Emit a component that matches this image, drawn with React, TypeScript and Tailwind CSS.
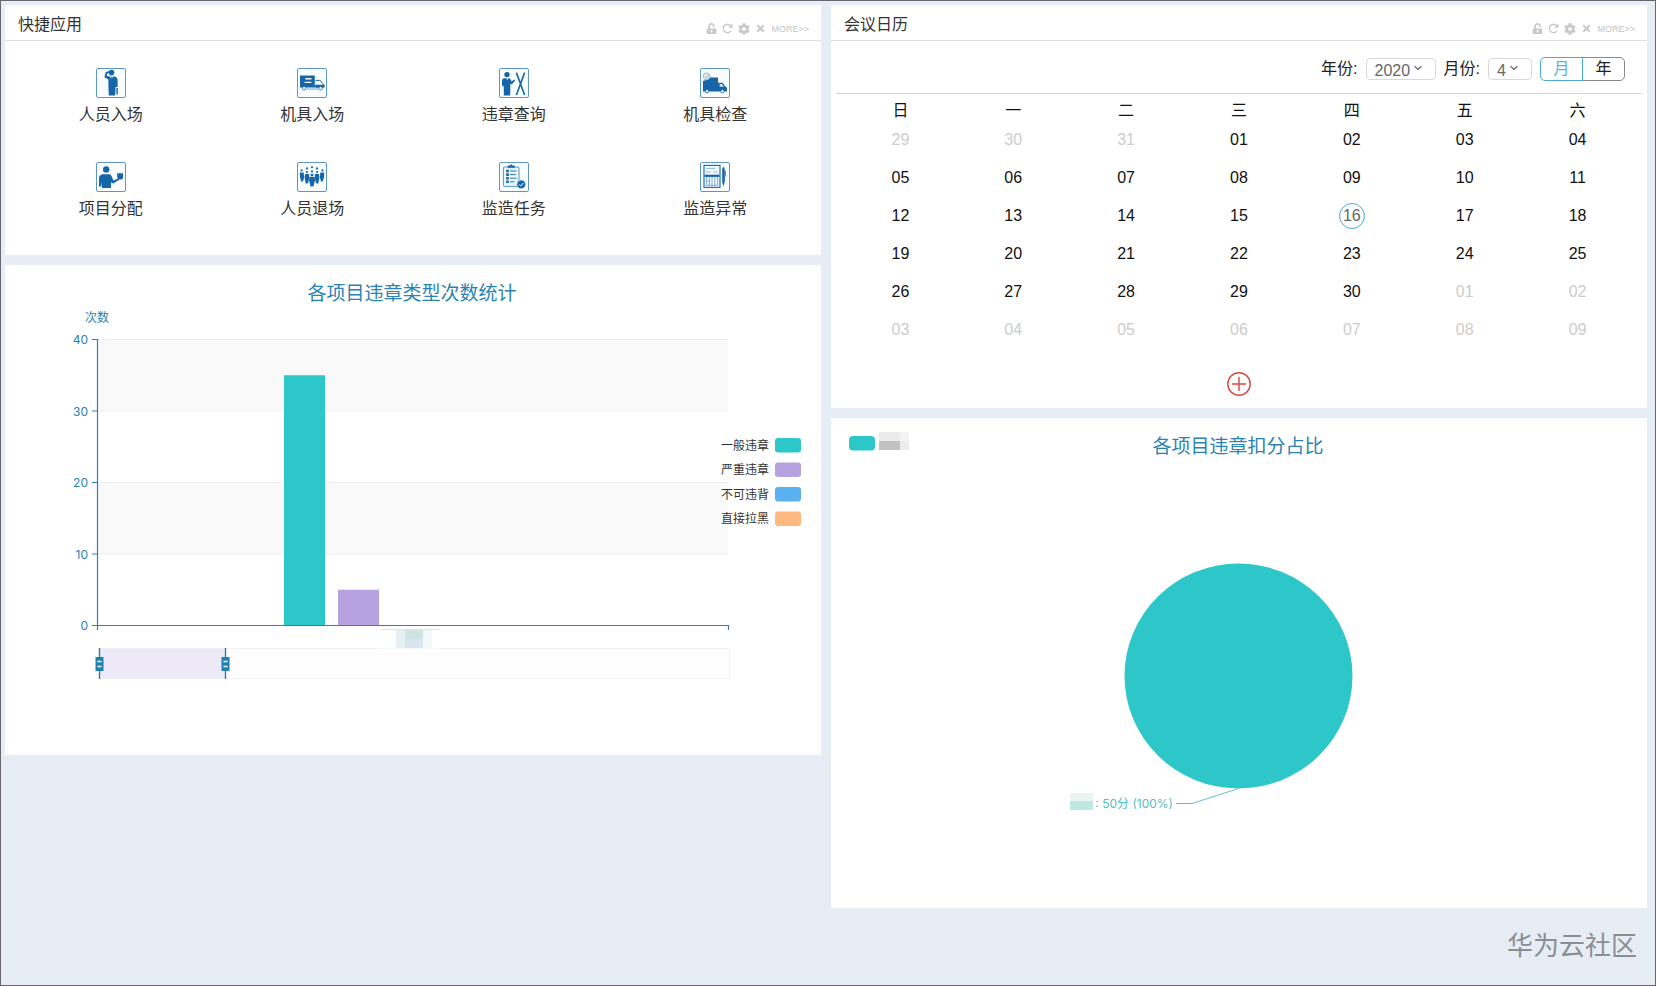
import { useState } from 'react'
import type { ReactNode } from 'react'
import { ChevronDown } from 'lucide-react'
import { FaCog, FaLock, FaTimes, FaUnlockAlt } from 'react-icons/fa'
import { FaArrowRotateRight } from 'react-icons/fa6'

type View = 'month' | 'year'

const BLUE = '#1565a8'
const AXIS = '#2a83b0'

const WEEKDAYS = ['日', '一', '二', '三', '四', '五', '六']

const WEEKS = [
  ['29', '30', '31', '01', '02', '03', '04'],
  ['05', '06', '07', '08', '09', '10', '11'],
  ['12', '13', '14', '15', '16', '17', '18'],
  ['19', '20', '21', '22', '23', '24', '25'],
  ['26', '27', '28', '29', '30', '01', '02'],
  ['03', '04', '05', '06', '07', '08', '09'],
]

const LEGEND = [
  { name: '一般违章', color: '#2ec7c9' },
  { name: '严重违章', color: '#b6a2de' },
  { name: '不可违背', color: '#5ab1ef' },
  { name: '直接拉黑', color: '#ffb980' },
]

const Salute = () => (
  <g fill={BLUE}>
    <circle cx="15.5" cy="4.6" r="2.8" />
    <path d="M8.4 9.2 L9.8 4 L13.6 3 L13.8 4.4 L11.2 5.4 L10.8 8 L13.6 8.6 L18.4 8.6 Q21.6 9 21.6 12.4 V19 H19.6 L19.2 27.5 H12.8 L12.4 18 V11.4 Z" />
    <path d="M14.2 8.6 L15.4 12.6 L16.8 8.6 Z" fill="#fff" />
    <path d="M15.2 9 L15.9 9 L16 12 L15.5 13 L15 12 Z" />
    <rect x="20.4" y="20" width="1.4" height="6.4" />
  </g>
)

const Truck = () => (
  <g fill={BLUE}>
    <path d="M3 7.5 H17.8 V18.5 H3 Z" />
    <path d="M8.4 10.8 H14.4 M7.6 14.4 H14.4" stroke="#fff" strokeWidth="1.4" />
    <path d="M18.6 12.4 H22.4 Q24.4 12.6 25.2 15.2 L27 16.8 V19 H18.6" fill="none" stroke={BLUE} strokeWidth="1" />
    <path d="M18.2 16.8 H27.2 V19.6 H3 V18 H18.2 Z" />
    <circle cx="7.2" cy="20.2" r="1.8" fill="#fff" stroke={BLUE} strokeWidth=".8" />
    <circle cx="23.6" cy="20.2" r="1.8" fill="#fff" stroke={BLUE} strokeWidth=".8" />
    <path d="M10 21 H21" stroke={BLUE} strokeWidth=".6" />
  </g>
)

const Violation = () => (
  <g fill={BLUE}>
    <circle cx="8" cy="6.6" r="2.7" />
    <path d="M5 10.2 L7.4 10.2 L8.2 12.6 L9 10.2 L11 10.4 L12.6 13.4 L15.2 11.4 L16.2 12.6 L12.8 16.6 L11.4 15.6 L11.2 27.5 H4.8 L4.8 18.4 L3 17.6 V12.4 Q3.2 10.6 5 10.2 Z" />
    <path d="M17.4 4.6 L25.6 27 M25.6 4.6 L17.4 27" stroke={BLUE} strokeWidth="1.6" />
  </g>
)

const TruckCheck = () => (
  <g fill={BLUE}>
    <path d="M3 13 L9 11 V9.4 H18 V23.4 H3 Z" />
    <path d="M18 14.8 H22.4 L25.4 18.6 L27 19.8 V23.4 H18 Z" />
    <path d="M19.6 16 H21.8 L24 18.8 H19.6 Z" fill="#cfe2f2" />
    <circle cx="6.6" cy="8.4" r="3.4" fill="#e4ecf2" stroke="#7d9db5" strokeWidth=".7" />
    <path d="M5 8.4 L6.4 9.8 L8.4 7" fill="none" stroke="#7d9db5" strokeWidth=".7" />
    <circle cx="7" cy="23.2" r="1.7" fill="#fff" stroke={BLUE} strokeWidth=".9" />
    <circle cx="22.4" cy="23.2" r="1.7" fill="#fff" stroke={BLUE} strokeWidth=".9" />
  </g>
)

const Assign = () => (
  <g fill={BLUE}>
    <circle cx="10.2" cy="7.4" r="3.2" />
    <path d="M6.4 12.2 H13.4 Q15.4 12.6 16 15 L17.2 18.4 L22.4 16.6 L23 18 L17 21.4 L15 20.2 V26 H6 V19.4 L5.4 24.6 H3 V16 Q3.4 12.8 6.4 12.2 Z" />
    <path d="M21 10.4 L22.6 12 L24 10.6 L25.4 12 L27 10.6 V16.6 L24 17.8 L21.4 16.4 Z" />
  </g>
)

const Crowd = () => (
  <g fill={BLUE}>
    {[[4.6, 8.4], [25.4, 8.4], [10, 6.4], [20, 6.4], [15, 5], [10, 10], [20, 10], [15, 9.4]].map(([x, y]) => (
      <circle key={`${x}-${y}`} cx={x} cy={y} r="1.1" />
    ))}
    <circle cx="15" cy="13" r="1.5" />
    <path d="M2.8 10.4 H6.6 L7.2 15 L6 19.6 H4.2 L3 15 Z" />
    <path d="M23.4 10.4 H27.2 L27 15 L25.8 19.6 H24 L22.8 15 Z" />
    <path d="M8 12 H12 L12.4 16 L10.8 21.4 H8.8 L7.6 16 Z" />
    <path d="M18 12 H22 L22.4 16 L21.2 21.4 H19.2 L17.6 16 Z" />
    <path d="M12.4 15 H17.6 L18 18.6 L16.4 24.4 H13.6 L12 18.6 Z" />
  </g>
)

const Clipboard = () => (
  <g fill="none" stroke={BLUE}>
    <rect x="4.4" y="5" width="15.6" height="19.4" rx="1" strokeWidth="1" fill="#eaf5fc" stroke="#4f96c8" />
    <path d="M9 5.6 V3.8 H11 L12.2 2.4 L13.4 3.8 H15.4 V5.6 Z" fill={BLUE} strokeWidth=".5" />
    <path d="M7.2 9 H9.8 M7.2 12.6 H9.8 M7.2 16.2 H9.8 M7.2 19.8 H9.8" strokeWidth="2.6" />
    <path d="M11 9 H17.6 M11 12.6 H16.8 M11 16.2 H17.6 M11 19.8 H15.4" strokeWidth=".9" />
    <circle cx="22.2" cy="22.4" r="4.4" fill={BLUE} stroke="#fff" strokeWidth=".6" />
    <path d="M20.2 22.6 L21.8 24 L24.4 21" stroke="#fff" strokeWidth="1" />
  </g>
)

const Sheet = () => (
  <g fill="none" stroke={BLUE}>
    <rect x="4" y="3.4" width="16" height="22" strokeWidth="1.1" fill="#f2f9fd" />
    <path d="M6 6.4 H15 M6 10 H10.4 M13.6 10 H17.6" strokeWidth=".7" stroke="#5f9cc6" />
    <path d="M4.6 13.8 H19.4" strokeWidth="2.2" />
    <path d="M6.4 15 V23.4 H17.6 V15 M9.4 15 V23.4 M12 15 V23.4 M14.8 15 V23.4 M6.4 19 H9.4" strokeWidth=".7" stroke="#4f8fbe" />
    <path d="M22.4 7.4 L23.4 4.8 L24.6 7.4 V19.4 L23.4 23.6 L22.4 19.4 Z" fill={BLUE} strokeWidth=".5" />
    <path d="M25.4 9 V14.6" strokeWidth=".8" />
  </g>
)

const APPS = [
  { name: '人员入场', icon: <Salute /> },
  { name: '机具入场', icon: <Truck /> },
  { name: '违章查询', icon: <Violation /> },
  { name: '机具检查', icon: <TruckCheck /> },
  { name: '项目分配', icon: <Assign /> },
  { name: '人员退场', icon: <Crowd /> },
  { name: '监造任务', icon: <Clipboard /> },
  { name: '监造异常', icon: <Sheet /> },
]

function Panel({ title, children }: { title?: string; children: ReactNode }) {
  const [locked, setLocked] = useState(false)

  return (
    <section className="bg-white">
      {title && (
        <header className="flex h-9 items-center justify-between border-b border-[#dfdfe3] pr-3 pl-[13px]">
          <h2 className="pt-1 text-base leading-6 text-[#333]">{title}</h2>
          <div className="flex items-center gap-[5px] pt-3 text-[#c9c9c9]">
            <button aria-label="锁定" onClick={() => setLocked(!locked)}>
              {locked ? <FaLock size={11} /> : <FaUnlockAlt size={11} />}
            </button>
            <button aria-label="刷新">
              <FaArrowRotateRight size={11} />
            </button>
            <button aria-label="设置">
              <FaCog size={12} />
            </button>
            <button aria-label="关闭">
              <FaTimes size={11} />
            </button>
            <a href="#more" className="text-[9px] leading-3 text-[#c4c4c4]">
              MORE&gt;&gt;
            </a>
          </div>
        </header>
      )}
      {children}
    </section>
  )
}

function QuickApps() {
  return (
    <Panel title="快捷应用">
      <div className="grid grid-cols-4 gap-y-[34px] px-[5px] pt-[27px] pb-[33px]">
        {APPS.map((app) => (
          <a key={app.name} href="#app" className="flex flex-col items-center gap-1">
            <svg width="30" height="30" viewBox="0 0 30 30">
              <rect x=".5" y=".5" width="29" height="29" rx="1.5" fill="#fafdff" stroke="#5f97c4" />
              {app.icon}
            </svg>
            <span className="text-base leading-[26px] text-[#333]">{app.name}</span>
          </a>
        ))}
      </div>
    </Panel>
  )
}

function MeetingCalendar() {
  const [view, setView] = useState<View>('month')
  const [year, setYear] = useState('2020')
  const [month, setMonth] = useState('4')

  const isOutside = (week: number, day: string) =>
    (week === 0 && Number(day) > 20) || (week >= 4 && Number(day) < 20)

  return (
    <Panel title="会议日历">
      <div className="mx-[5px] flex h-[53px] items-center justify-end gap-2 border-b border-[#d4d4d4] pt-1 pr-[17px] text-base leading-6 text-[#222]">
        <label htmlFor="year">年份:</label>
        <div className="relative flex">
          <select
            id="year"
            value={year}
            onChange={(e) => setYear(e.target.value)}
            className="h-[22px] w-[70px] appearance-none rounded border border-[#d9d9d9] bg-white pt-0.5 pl-2 text-base leading-5 text-[#666]"
          >
            <option>2019</option>
            <option>2020</option>
            <option>2021</option>
          </select>
          <ChevronDown size={12} strokeWidth={3} className="pointer-events-none absolute top-1 right-3 text-[#777]" />
        </div>
        <label htmlFor="month">月份:</label>
        <div className="relative flex">
          <select
            id="month"
            value={month}
            onChange={(e) => setMonth(e.target.value)}
            className="h-[22px] w-11 appearance-none rounded border border-[#d9d9d9] bg-white pt-0.5 pl-2 text-base leading-5 text-[#666]"
          >
            {Array.from({ length: 12 }, (_, i) => (
              <option key={i}>{i + 1}</option>
            ))}
          </select>
          <ChevronDown size={12} strokeWidth={3} className="pointer-events-none absolute top-1 right-3 text-[#777]" />
        </div>
        <div className="flex">
          {([
            ['month', '月'],
            ['year', '年'],
          ] as [View, string][]).map(([v, label]) => (
            <button
              key={v}
              onClick={() => setView(v)}
              className={`h-6 w-[43px] border leading-5 first:rounded-l-[5px] last:-ml-px last:rounded-r-[5px] ${
                view === v ? 'z-10 border-[#4aa9d6] text-[#5ab4e0]' : 'border-[#888]'
              }`}
            >
              {label}
            </button>
          ))}
        </div>
      </div>

      <div className="px-[13px]">
        <table className="w-full table-fixed text-center text-base leading-5 text-[#111]">
          <thead>
            <tr>
              {WEEKDAYS.map((d) => (
                <th key={d} className="pt-[7px] font-normal">
                  {d}
                </th>
              ))}
            </tr>
          </thead>
          <tbody>
            {WEEKS.map((week, i) => (
              <tr key={i} className="h-[38px]">
                {week.map((day) => (
                  <td key={day} className={isOutside(i, day) ? 'text-[#ccc]' : ''}>
                    {i === 2 && day === '16' ? (
                      <span className="mx-auto flex size-[26px] items-center justify-center rounded-full border border-[#4ba3d8] text-[#666]">
                        {day}
                      </span>
                    ) : (
                      day
                    )}
                  </td>
                ))}
              </tr>
            ))}
          </tbody>
        </table>
      </div>

      <div className="flex justify-center pt-[23px] pb-3">
        <button aria-label="新增会议">
          <svg width="24" height="24" viewBox="0 0 24 24" fill="none" stroke="#d8453f" strokeWidth="1.4">
            <circle cx="12" cy="12" r="11.2" />
            <path d="M12 5 V19 M5 12 H19" />
          </svg>
        </button>
      </div>
    </Panel>
  )
}

const CHART_TEXT = "block h-auto w-full font-['Inter','Noto_Sans_CJK_SC',sans-serif]"

const yPos = (value: number) => 360.5 - value * 7.15

function ViolationChart() {
  return (
    <Panel>
      <svg viewBox="0 0 816 490" className={CHART_TEXT}>
        <text x="407" y="35" fontSize="19" fill={AXIS} textAnchor="middle">
          各项目违章类型次数统计
        </text>
        <text x="92" y="57" fontSize="12" fill={AXIS} textAnchor="middle">
          次数
        </text>

        <rect x="93" y={yPos(40)} width="630" height="71.5" fill="#f9f9f9" />
        <rect x="93" y={yPos(20)} width="630" height="71.5" fill="#f9f9f9" />
        {[10, 20, 30, 40].map((v) => (
          <path key={v} d={`M93 ${yPos(v)} H723`} stroke="#efeff1" />
        ))}

        <rect x="279" y={yPos(35)} width="41" height="250" fill="#2ec7c9" />
        <rect x="333" y={yPos(5)} width="41" height="36" fill="#b6a2de" />

        <path d="M92.5 74 V365 M92 360.5 H723.5 V365" fill="none" stroke={AXIS} strokeWidth="1.2" />
        {[0, 10, 20, 30, 40].map((v) => (
          <g key={v}>
            <path d={`M87 ${yPos(v)} H92`} stroke={AXIS} />
            <text x="83" y={yPos(v) + 4.5} fontSize="12" fill={AXIS} textAnchor="end">
              {v}
            </text>
          </g>
        ))}

        {LEGEND.map((item, i) => (
          <g key={item.name}>
            <text x="764" y={184.5 + i * 24.5} fontSize="12" fill="#333" textAnchor="end">
              {item.name}
            </text>
            <rect x="770" y={173 + i * 24.5} width="26" height="14.5" rx="3" fill={item.color} />
          </g>
        ))}

        <rect x="94.5" y="383.5" width="630" height="30" fill="#fefeff" stroke="#f1f1f5" />
        <rect x="95" y="383.5" width="126" height="30" fill="#ede9f7" />
        {[94.5, 220.5].map((x) => (
          <g key={x}>
            <path d={`M${x} 383 V414`} stroke="#2080b0" strokeWidth="1.4" />
            <rect x={x - 4} y="392" width="8" height="14" fill="#2080b0" />
            <path d={`M${x - 2} 396.5 H${x + 2} M${x - 2} 401.5 H${x + 2}`} stroke="#fff" strokeWidth="1.6" />
          </g>
        ))}

        {/* masked category name */}
        <rect x="376" y="363.5" width="59" height="20" fill="#fff" />
        <path d="M376 364.5 H435" stroke="#d5e8ee" />
        <rect x="391" y="365" width="9" height="18" fill="#e6f0f2" />
        <rect x="400" y="365" width="18" height="9" fill="#cfe4e2" />
        <rect x="400" y="374" width="18" height="9" fill="#d8e5ec" />
        <rect x="418" y="365" width="9" height="18" fill="#f1f8f9" />
      </svg>
    </Panel>
  )
}

function DeductionChart() {
  return (
    <Panel>
      <svg viewBox="0 0 816 490" className={CHART_TEXT}>
        <rect x="18" y="18" width="26" height="14.5" rx="4" fill="#2ec7c9" />
        <rect x="48" y="14" width="21" height="9" fill="#ebebeb" />
        <rect x="48" y="23" width="21" height="9" fill="#c2c2c2" />
        <rect x="69" y="14" width="9" height="9" fill="#f3f3f3" />
        <rect x="69" y="23" width="9" height="9" fill="#ececec" />

        <text x="407" y="35" fontSize="19" fill={AXIS} textAnchor="middle">
          各项目违章扣分占比
        </text>

        <ellipse cx="407.5" cy="258" rx="114" ry="112.5" fill="#2ec7c9" />
        <path d="M407.5 370.5 L361 385.5 H345" fill="none" stroke="#5fc3c8" />
        <rect x="239" y="375" width="23" height="8" fill="#ebf4f2" />
        <rect x="239" y="383" width="23" height="9" fill="#c0e8e3" />
        <text x="342" y="390" fontSize="12" fill="#55bcc0" textAnchor="end">
          : 50分 (100%)
        </text>
      </svg>
    </Panel>
  )
}

export default function App() {
  return (
    <div className="flex min-h-screen flex-col border border-[#69666f] bg-[#e7edf4] pt-1 pr-2 pl-1 font-['Liberation_Sans','Noto_Sans_CJK_SC',sans-serif]">
      <main className="grid grid-cols-2 items-start gap-2.5">
        <div className="flex flex-col gap-2.5">
          <QuickApps />
          <ViolationChart />
        </div>
        <div className="flex flex-col gap-2.5">
          <MeetingCalendar />
          <DeductionChart />
        </div>
      </main>
      <footer className="pt-5 pr-2.5 text-right text-[26px] leading-9 text-[#8a8f95]">华为云社区</footer>
    </div>
  )
}
